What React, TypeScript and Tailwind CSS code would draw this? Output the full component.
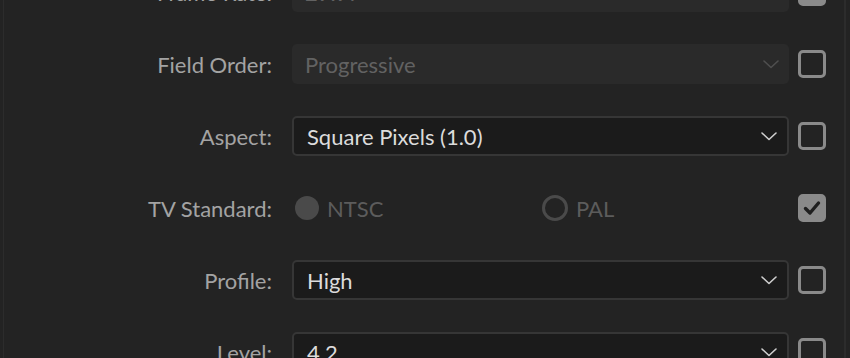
import type { ReactNode } from 'react';

function Chevron({ disabled }: { disabled?: boolean }) {
  return (
    <svg width="16" height="9" viewBox="0 0 16 9" fill="none">
      <path
        d="M1 1l7 6.5L15 1"
        stroke={disabled ? '#4f4f4f' : '#cfcfcf'}
        strokeWidth="1.6"
        strokeLinecap="round"
        strokeLinejoin="round"
      />
    </svg>
  );
}

function Checkbox({ checked }: { checked?: boolean }) {
  return (
    <div
      className={`w-[28px] h-[28px] rounded-[5px] border-[3px] border-[#8a8a8a] flex items-center justify-center ${
        checked ? 'bg-[#8a8a8a]' : ''
      }`}
    >
      {checked && (
        <svg width="18" height="16" viewBox="0 0 18 16" fill="none">
          <path d="M2.5 8.5l4.5 4.5L15.5 3" stroke="#1f1f1f" strokeWidth="3.4" strokeLinecap="round" strokeLinejoin="round" />
        </svg>
      )}
    </div>
  );
}

function Select({ value, disabled }: { value: string; disabled?: boolean }) {
  return (
    <div
      className={`w-[497px] h-[40px] rounded-[5px] flex items-center justify-between pl-[13px] pr-[10px] ${
        disabled ? 'bg-[#2a2a2a] text-[#626262]' : 'bg-[#1b1b1b] border-2 border-[#363636] text-[#dcdcdc]'
      }`}
    >
      <span>{value}</span>
      <Chevron disabled={disabled} />
    </div>
  );
}

function Row({ label, children, checked }: { label: string; children: ReactNode; checked?: boolean }) {
  return (
    <div className="flex items-center h-[40px]">
      <div className="w-[268px] text-right text-[#a3a3a3]">{label}</div>
      <div className="ml-[20px] flex items-center">{children}</div>
      <div className="ml-[9px]">
        <Checkbox checked={checked} />
      </div>
    </div>
  );
}

function Radio({ label, selected, className }: { label: string; selected?: boolean; className?: string }) {
  return (
    <div className={`flex items-center gap-[8px] text-[#5c5c5c] ${className ?? ''}`}>
      {selected ? (
        <div className="w-[24px] h-[24px] rounded-full bg-[#4a4a4a]" />
      ) : (
        <div className="w-[26px] h-[26px] rounded-full border-[3px] border-[#4a4a4a]" />
      )}
      <span>{label}</span>
    </div>
  );
}

export default function App() {
  return (
    <div
      className="w-[850px] h-[358px] bg-[#232323] overflow-hidden flex flex-col text-[22px]"
      style={{ fontFamily: 'Lato, "Open Sans", sans-serif' }}
    >
      <div className="flex-1 flex pl-[3px]">
        <div className="w-px bg-[#2c2c2c]" />
        <div className="flex-1 flex flex-col gap-[32px] mt-[-28px]">
          <Row label="Frame Rate:" checked>
            <Select value="29.97" disabled />
          </Row>
          <Row label="Field Order:">
            <Select value="Progressive" disabled />
          </Row>
          <Row label="Aspect:">
            <Select value="Square Pixels (1.0)" />
          </Row>
          <Row label="TV Standard:" checked>
            <div className="w-[497px] flex items-center pl-[3px]">
              <Radio label="NTSC" selected className="w-[247px]" />
              <Radio label="PAL" />
            </div>
          </Row>
          <Row label="Profile:">
            <Select value="High" />
          </Row>
          <Row label="Level:">
            <Select value="4.2" />
          </Row>
        </div>
        <div className="w-[2px] bg-[#2c2c2c] mr-[4px]" />
      </div>
      <div className="h-[3px] bg-black" />
    </div>
  );
}
